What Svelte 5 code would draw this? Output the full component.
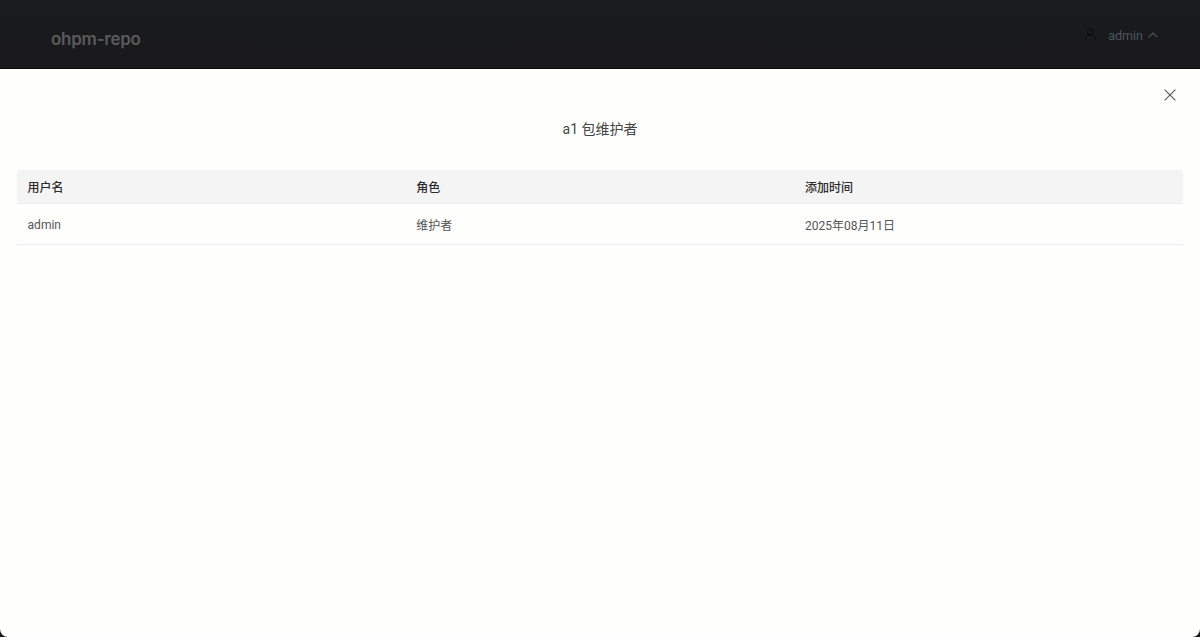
<script>
  const columns = ['用户名', '角色', '添加时间'];
  const rows = [['admin', '维护者', '2025年08月11日']];
</script>

<div class="page">
  <header class="topbar">
    <div class="logo">ohpm-repo</div>
    <div class="user">
      <svg class="user-icon" viewBox="0 0 14 14" width="13" height="13" fill="none" stroke="#0c0c0e" stroke-width="1.1">
        <circle cx="7" cy="4.2" r="3.1" />
        <path d="M1.2 13.4c0-3.4 2.5-5.8 5.8-5.8s5.8 2.4 5.8 5.8" />
      </svg>
      <span class="name">admin</span>
      <svg viewBox="0 0 10 6" width="10" height="6" fill="none" stroke="#55575a" stroke-width="1.1">
        <path d="M.6 5.4 5 1l4.4 4.4" />
      </svg>
    </div>
  </header>

  <section class="dialog">
    <button class="close" aria-label="关闭">
      <svg viewBox="0 0 12 12" width="12" height="12" fill="none" stroke="#555" stroke-width="1.1">
        <path d="M.6.6l10.8 10.8M11.4.6.6 11.4" />
      </svg>
    </button>
    <h2 class="title">a1 包维护者</h2>
    <div class="table">
      <div class="row head">
        {#each columns as c}<div class="cell">{c}</div>{/each}
      </div>
      {#each rows as r}
        <div class="row body">
          {#each r as v}<div class="cell">{v}</div>{/each}
        </div>
      {/each}
    </div>
  </section>
</div>

<style>
  :global(body) {
    margin: 0;
    background: #18181a;
  }
  .page {
    height: 637px;
    display: flex;
    flex-direction: column;
    overflow: hidden;
    font-family: Roboto, "Noto Sans CJK SC", sans-serif;
    background: #18181a;
  }
  .topbar {
    flex: none;
    height: 69px;
    box-sizing: border-box;
    display: flex;
    align-items: center;
    justify-content: space-between;
    padding: 8px 42px 0 51px;
    background: linear-gradient(#1a1b1e, #19191b);
    border-bottom: 1px solid #0a0a0a;
  }
  .logo {
    font-family: Inter, sans-serif;
    font-size: 17px;
    font-weight: 600;
    letter-spacing: -0.25px;
    color: #5a5a5a;
    padding-top: 1px;
  }
  .user {
    display: flex;
    align-items: center;
    color: #4d5561;
    font-size: 12.5px;
    margin-top: -6px;
  }
  .user-icon {
    margin-right: 11px;
    margin-top: -2px;
  }
  .name {
    margin-right: 5px;
  }
  .dialog {
    flex: 1;
    position: relative;
    background: #fefefd;
    border-radius: 0 0 8px 8px;
    padding: 0 17px;
  }
  .close {
    position: absolute;
    top: 20px;
    right: 24px;
    padding: 0;
    border: 0;
    background: none;
    line-height: 0;
  }
  .title {
    margin: 0;
    padding-top: 50px;
    height: 101px;
    box-sizing: border-box;
    text-align: center;
    font-size: 14px;
    font-weight: 400;
    line-height: 20px;
    color: #444;
  }
  .row {
    display: grid;
    grid-template-columns: repeat(3, 1fr);
    align-items: center;
    font-size: 12px;
  }
  .cell {
    padding: 0 10.6px;
  }
  .head {
    height: 34px;
    box-sizing: border-box;
    padding-bottom: 1px;
    background: #f4f4f4;
    border-bottom: 1px solid #ebeef5;
    color: #2a2a2a;
    font-weight: 500;
  }
  .body {
    height: 41px;
    box-sizing: border-box;
    padding-top: 1px;
    border-bottom: 1px solid #e9ebf3;
    color: #555;
  }
</style>
